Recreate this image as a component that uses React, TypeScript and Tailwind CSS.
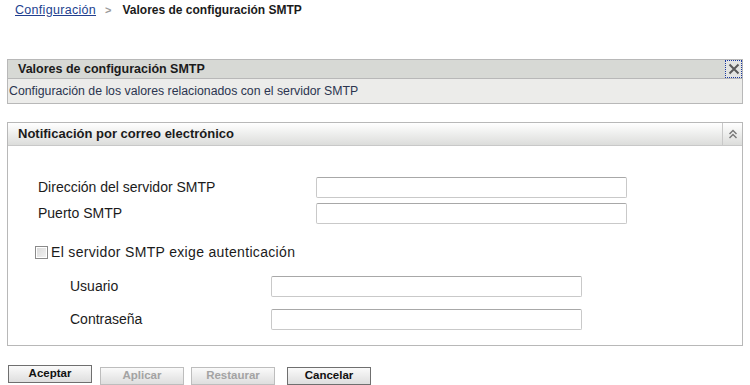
const font = { fontFamily: '"Liberation Sans", Arial, sans-serif' }

function TextBox({ w }: { w: string }) {
  return (
    <input
      type="text"
      className={`${w} h-[21px] rounded-[2px] border border-[#c9c9c9] border-t-[#a8a8a8] bg-white px-1 text-[12px] outline-none`}
    />
  )
}

function Button({ label, disabled }: { label: string; disabled?: boolean }) {
  return (
    <button
      disabled={disabled}
      className={`h-[18px] w-[84px] border bg-gradient-to-b from-[#fafafa] to-[#dedede] text-[11.5px] font-bold leading-none ${
        disabled ? 'border-[#bdbdbd] text-[#a3a3a3]' : 'border-[#6f6f6f] text-[#111]'
      }`}
    >
      {label}
    </button>
  )
}

export default function App() {
  return (
    <div className="h-[385px] w-[750px] bg-white text-[#1b1b1b]" style={font}>
      {/* Breadcrumb */}
      <div className="flex items-center pl-[15px] pt-[3px] text-[12px] leading-[15px]">
        <a href="#" className="text-[12.5px] tracking-[0.3px] text-[#223f8f] underline">
          Configuración
        </a>
        <span className="ml-[9px] mr-[11px] text-[11px] font-bold text-[#9a9a9a]">&gt;</span>
        <span className="font-bold">Valores de configuración SMTP</span>
      </div>

      {/* Info panel */}
      <div className="ml-[7px] mt-[41px] w-[736px] border border-[#b8b8b8]">
        <div className="flex h-[19px] items-center justify-between border-b border-[#b8b8b8] bg-[#d7d9d5] pl-[10px]">
          <span className="text-[12.5px] font-bold">Valores de configuración SMTP</span>
          <button className="flex h-[18px] w-[17px] items-center justify-center border border-dotted border-[#1c3aa0] bg-[#e4e5e2]">
            <svg width="12" height="12" viewBox="0 0 12 12">
              <path d="M1.5 1.5 L10.5 10.5 M10.5 1.5 L1.5 10.5" stroke="#5a5a5a" strokeWidth="2" />
            </svg>
          </button>
        </div>
        <div className="flex h-[24px] items-center bg-[#ececea] pl-[1px] text-[12.3px] text-[#2b3550]">
          Configuración de los valores relacionados con el servidor SMTP
        </div>
      </div>

      {/* Notification panel */}
      <div className="ml-[7px] mt-[18px] w-[736px] border border-[#b8b8b8]">
        <div className="flex h-[23px] items-center justify-between border-b border-[#c8c8c8] bg-gradient-to-b from-white to-[#dcdddb] pl-[10px]">
          <span className="text-[13px] font-bold">Notificación por correo electrónico</span>
          <div className="flex h-full w-[20px] items-center justify-center border-l border-[#c8c8c8]">
            <svg width="10" height="10" viewBox="0 0 10 10" fill="none" stroke="#777" strokeWidth="1.4">
              <path d="M1.5 5 L5 1.5 L8.5 5" />
              <path d="M1.5 9 L5 5.5 L8.5 9" />
            </svg>
          </div>
        </div>

        <div className="flex flex-col pb-[15px] pt-[31px] text-[14px] leading-[17px]">
          <div className="flex items-center">
            <span className="w-[308px] pl-[30px]">Dirección del servidor SMTP</span>
            <TextBox w="w-[311px]" />
          </div>
          <div className="mt-[5px] flex items-center">
            <span className="w-[308px] pl-[30px]">Puerto SMTP</span>
            <TextBox w="w-[311px]" />
          </div>

          <label className="mt-[20px] flex items-center pl-[27px] tracking-[0.33px]">
            <span className="mr-[3px] h-[13px] w-[13px] border border-[#8a8a8a] bg-gradient-to-br from-[#d8d8d8] to-[#f4f4f4] shadow-[inset_0_0_0_1px_#fff]" />
            El servidor SMTP exige autenticación
          </label>

          <div className="mt-[15px] flex items-center">
            <span className="w-[263px] pl-[62px]">Usuario</span>
            <TextBox w="w-[311px]" />
          </div>
          <div className="mt-[12px] flex items-center">
            <span className="w-[263px] pl-[62px]">Contraseña</span>
            <TextBox w="w-[311px]" />
          </div>
        </div>
      </div>

      {/* Buttons */}
      <div className="ml-[8px] mt-[16px] flex items-center">
        <Button label="Aceptar" />
        <div className="ml-[8px]">
          <Button label="Aplicar" disabled />
        </div>
        <div className="ml-[7px]">
          <Button label="Restaurar" disabled />
        </div>
        <div className="ml-[12px]">
          <Button label="Cancelar" />
        </div>
      </div>
    </div>
  )
}
